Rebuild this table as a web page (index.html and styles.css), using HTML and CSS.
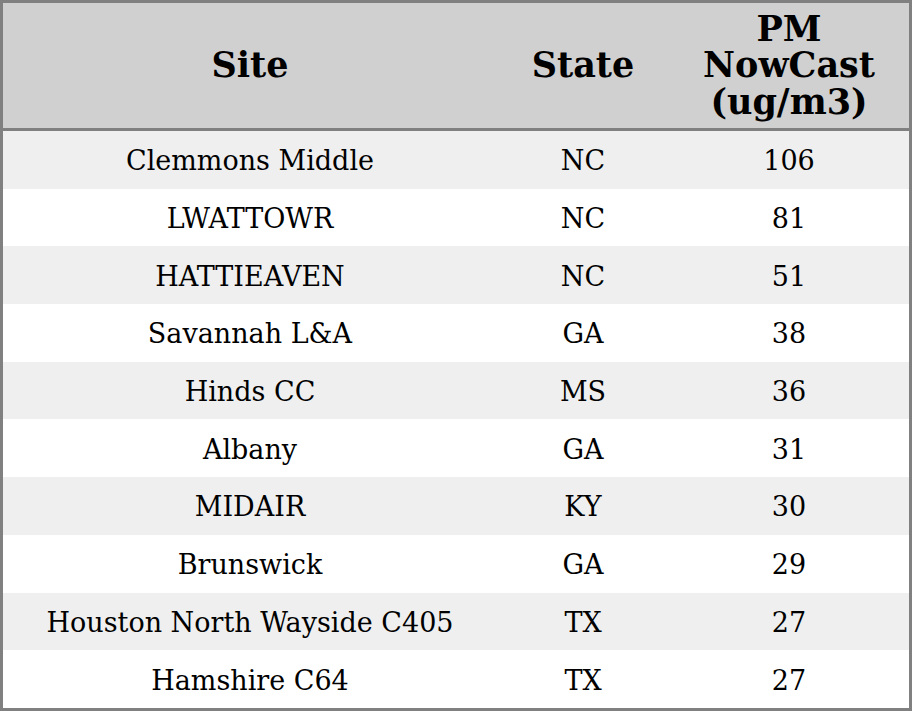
FILE: index.html
```html
<!DOCTYPE html>
<html>
<head>
<meta charset="utf-8">
<link rel="stylesheet" href="styles.css">
</head>
<body>
<table class="aq">
<thead>
<tr><th class="c-site">Site</th><th class="c-state">State</th><th class="c-pm">PM<br>NowCast<br>(ug/m3)</th></tr>
</thead>
<tbody>
<tr><td>Clemmons Middle</td><td>NC</td><td>106</td></tr>
<tr><td>LWATTOWR</td><td>NC</td><td>81</td></tr>
<tr><td>HATTIEAVEN</td><td>NC</td><td>51</td></tr>
<tr><td>Savannah L&amp;A</td><td>GA</td><td>38</td></tr>
<tr><td>Hinds CC</td><td>MS</td><td>36</td></tr>
<tr><td>Albany</td><td>GA</td><td>31</td></tr>
<tr><td>MIDAIR</td><td>KY</td><td>30</td></tr>
<tr><td>Brunswick</td><td>GA</td><td>29</td></tr>
<tr><td>Houston North Wayside C405</td><td>TX</td><td>27</td></tr>
<tr><td>Hamshire C64</td><td>TX</td><td>27</td></tr>
</tbody>
</table>
</body>
</html>
```
FILE: styles.css
```css
html, body {
  margin: 0;
  padding: 0;
  background: #ffffff;
}
.aq {
  width: 912px;
  height: 711px;
  border-collapse: collapse;
  border: 3px solid #808080;
  font-family: "DejaVu Serif", serif;
  color: #000;
  table-layout: fixed;
}
.aq th {
  background: #d0d0d0;
  font-size: 35px;
  font-weight: bold;
  line-height: 36.5px;
  height: 125px;
  padding: 0;
  text-align: center;
  border-bottom: 3px solid #808080;
}
.c-site { width: 494px; }
.c-state { width: 172px; }
.c-pm { width: 240px; }
.aq td {
  font-size: 27px;
  text-align: center;
  padding: 2px 0 0;
  height: 55px;
}
.aq tbody tr:nth-child(odd) td {
  background: #efefef;
}
```
